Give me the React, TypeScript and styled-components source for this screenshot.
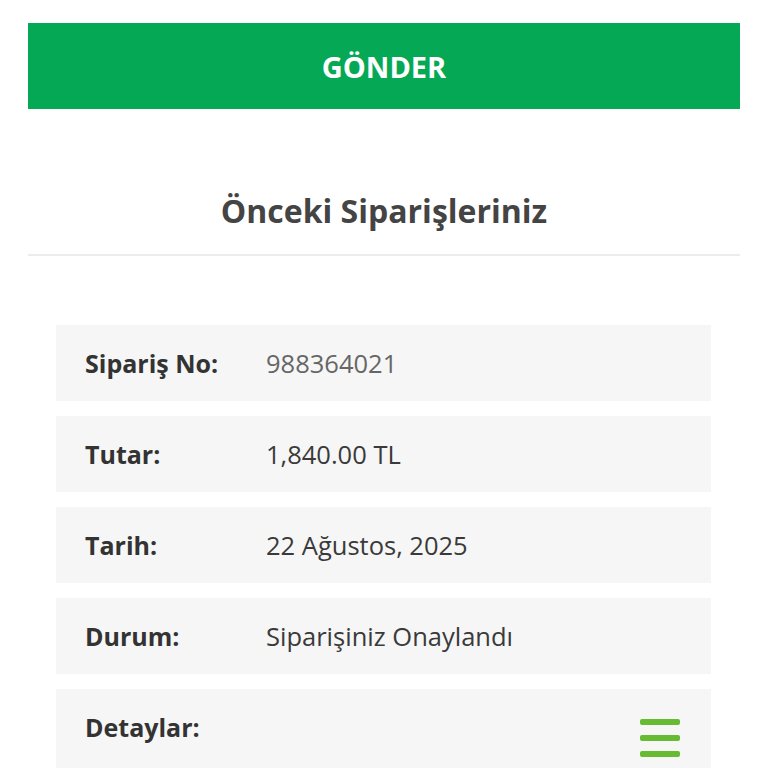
import React from "react";
import styled, { createGlobalStyle } from "styled-components";

const Global = createGlobalStyle`
  html, body { margin: 0; padding: 0; background: #ffffff; }
  body { font-family: "Open Sans", "Noto Sans", Arial, sans-serif; }
`;

const Page = styled.div`
  width: 768px;
  height: 768px;
  overflow: hidden;
  box-sizing: border-box;
  padding: 23px 28px 0 28px;
`;

const SubmitButton = styled.button`
  display: flex;
  height: 86px;
  width: 100%;
  border: none;
  background: #05a855;
  color: #ffffff;
  font-family: "Open Sans", Arial, sans-serif;
  font-weight: 700;
  font-size: 29px;
  align-items: center;
  justify-content: center;
  padding: 0;
  margin: 0;
`;

const Title = styled.h2`
  margin: 0;
  height: 147px;
  display: flex;
  align-items: center;
  justify-content: center;
  padding-top: 58px;
  box-sizing: border-box;
  font-size: 32px;
  font-weight: 700;
  color: #444444;
  border-bottom: 2px solid #ececec;
`;

const List = styled.div`
  display: flex;
  flex-direction: column;
  gap: 15px;
  padding: 69px 29px 0 28px;
`;

const Row = styled.div<{ $tall?: boolean }>`
  background: #f6f6f6;
  height: ${(p) => (p.$tall ? "90px" : "76px")};
  flex-shrink: 0;
  display: flex;
  align-items: ${(p) => (p.$tall ? "flex-start" : "center")};
  padding: ${(p) => (p.$tall ? "21px 31px 0 29px" : "0 31px 0 29px")};
  box-sizing: border-box;
`;

const Label = styled.span`
  width: 181px;
  flex-shrink: 0;
  font-size: 25px;
  font-weight: 700;
  color: #333333;
`;

const Value = styled.span<{ $muted?: boolean }>`
  font-size: 25.5px;
  font-weight: 400;
  color: ${(p) => (p.$muted ? "#666666" : "#3a3a3a")};
`;

const MenuIcon = styled.div`
  margin-left: auto;
  margin-top: 9px;
  width: 40px;
  display: flex;
  flex-direction: column;
  gap: 10px;
  span {
    display: block;
    height: 6px;
    border-radius: 2px;
    background: #66bb33;
  }
`;

export default function App() {
  return (
    <>
      <Global />
      <Page>
        <SubmitButton>GÖNDER</SubmitButton>
        <Title>Önceki Siparişleriniz</Title>
        <List>
          <Row>
            <Label>Sipariş No:</Label>
            <Value $muted>988364021</Value>
          </Row>
          <Row>
            <Label>Tutar:</Label>
            <Value>1,840.00 TL</Value>
          </Row>
          <Row>
            <Label>Tarih:</Label>
            <Value>22 Ağustos, 2025</Value>
          </Row>
          <Row>
            <Label>Durum:</Label>
            <Value>Siparişiniz Onaylandı</Value>
          </Row>
          <Row $tall>
            <Label>Detaylar:</Label>
            <MenuIcon>
              <span />
              <span />
              <span />
            </MenuIcon>
          </Row>
        </List>
      </Page>
    </>
  );
}
